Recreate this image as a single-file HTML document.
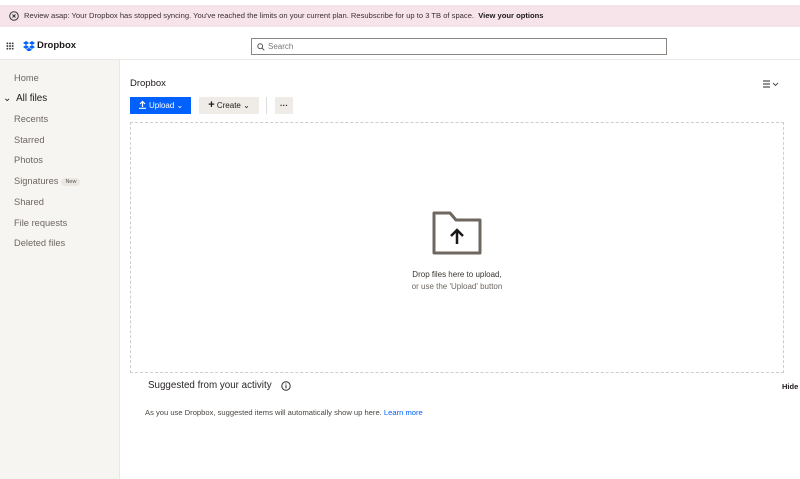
<!DOCTYPE html>
<html><head><meta charset="utf-8"><style>
*{box-sizing:border-box;margin:0;padding:0}
body{width:800px;height:479px;overflow:hidden;background:#fff;font-family:"Liberation Sans",sans-serif;color:#1e1919;position:relative}
.banner{position:absolute;left:0;top:5px;width:800px;height:22px;background:#f6e4ea;font-size:7.6px;line-height:22px;padding-left:24px;color:#3a3030}
.banner .x{position:absolute;left:9px;top:6px;width:10px;height:10px;border:1px solid #333;border-radius:50%}
.banner b{color:#1e1919}
.header{position:absolute;top:27px;left:0;width:800px;height:33px;border-bottom:1px solid #ece9e4}
.grid{position:absolute;left:6px;top:15px;width:8px;height:8px;background-image:radial-gradient(#333 0.8px,transparent 1px);background-size:2.7px 2.7px}
.logo{position:absolute;left:23px;top:13px;font-size:9.5px;font-weight:bold;display:flex;align-items:center;gap:2px}
.search{position:absolute;left:251px;top:11px;width:416px;height:17px;border:1px solid #8a8580;font-size:8px;color:#777;line-height:15px;padding-left:16px}
.search svg{position:absolute;left:5px;top:4px}
.side{position:absolute;left:0;top:60px;width:120px;height:419px;background:#f7f5f2;border-right:1px solid #ebe8e3}
.side div{position:absolute;left:14px;font-size:9.3px;color:#6d6660}
.side .act{color:#1e1919;font-size:9.8px}
.new{display:inline-block;background:#ebe6df;border-radius:6px;font-size:5.5px;padding:1px 4px;margin-left:3px;color:#555;vertical-align:1px}
.title{position:absolute;left:130px;top:78px;font-size:9.5px}
.btn{position:absolute;top:97px;height:17px;font-size:8px;line-height:17px;text-align:center}
.up{left:130px;width:61px;background:#0061fe;color:#fff}
.cr{left:199px;width:60px;background:#efece8;color:#1e1919}
.dots{left:275px;width:18px;background:#efece8;font-weight:bold}
.sep{position:absolute;left:266px;top:97px;width:1px;height:17px;background:#ddd}
.drop{position:absolute;left:130px;top:122px;width:654px;height:251px;border:1px dashed #d0ccc7}
.fold{position:absolute;left:432px;top:210px}
.dt{position:absolute;left:357px;width:200px;text-align:center;font-size:8px;color:#3a3530}
.sug{position:absolute;left:148px;top:380px;font-size:9.8px;color:#2a2525}
.info{position:absolute;left:281px;top:381px}
.hide{position:absolute;left:782px;top:382px;font-size:7.5px;font-weight:bold}
.note{position:absolute;left:145px;top:408px;font-size:7.6px;color:#4a4540}
.note span{color:#0061fe}
.view{position:absolute;left:763px;top:79px}
</style></head><body>
<div class="banner"><svg class="x" style="border:none" width="10" height="10" viewBox="0 0 10 10"><circle cx="5" cy="5" r="4.3" fill="none" stroke="#333"/><path d="M3.5 3.5l3 3M6.5 3.5l-3 3" stroke="#333"/></svg>Review asap: Your Dropbox has stopped syncing. You've reached the limits on your current plan. Resubscribe for up to 3 TB of space. &nbsp;<b>View your options</b></div>
<div class="header">
<div class="grid"></div>
<div class="logo"><svg width="12" height="10" viewBox="0 0 12 10"><path fill="#0061fe" d="M3 0L0 2l3 2 3-2zM9 0L6 2l3 2 3-2zM0 6l3 2 3-2-3-2zM9 4L6 6l3 2 3-2zM3 8.7L6 10.7 9 8.7 6 6.7z"/></svg>Dropbox</div>
<div class="search"><svg width="8" height="8" viewBox="0 0 8 8"><circle cx="3.2" cy="3.2" r="2.4" fill="none" stroke="#555" stroke-width="1"/><path d="M5 5l2.3 2.3" stroke="#555"/></svg>Search</div>
</div>
<div class="side">
<div style="top:13px">Home</div>
<div class="act" style="top:33px;left:3px">⌄&nbsp; All files</div>
<div style="top:54px">Recents</div>
<div style="top:75px">Starred</div>
<div style="top:95px">Photos</div>
<div style="top:116px">Signatures<span class="new">New</span></div>
<div style="top:137px">Shared</div>
<div style="top:158px">File requests</div>
<div style="top:178px">Deleted files</div>
</div>
<div class="title">Dropbox</div>
<svg class="view" width="18" height="10" viewBox="0 0 18 10"><path d="M0 2h7M0 5h7M0 8h7" stroke="#555" stroke-width="1.2"/><path d="M10 4l2.5 2.5L15 4" stroke="#555" fill="none"/></svg>
<div class="btn up"><svg width="9" height="9" viewBox="0 0 9 9" style="vertical-align:-1px"><path d="M4.5 7V1.5M2 4l2.5-2.5L7 4M1 8.3h7" stroke="#fff" stroke-width="1.2" fill="none"/></svg> Upload ⌄</div>
<div class="btn cr"><b style="font-size:11px">+</b> Create ⌄</div>
<div class="sep"></div>
<div class="btn dots">···</div>
<div class="drop"></div>
<svg class="fold" width="50" height="46" viewBox="0 0 50 46"><path d="M2 3h16l6 7h24v33H2z" fill="none" stroke="#6e6760" stroke-width="3" stroke-linejoin="round"/><path d="M25 34V20M19 26l6-6 6 6" stroke="#1e1919" stroke-width="2.5" fill="none"/></svg>
<div class="dt" style="top:270px">Drop files here to upload,</div>
<div class="dt" style="top:282px;color:#6d6660">or use the 'Upload' button</div>
<div class="sug">Suggested from your activity</div>
<svg class="info" width="10" height="10" viewBox="0 0 10 10"><circle cx="5" cy="5" r="4.2" fill="none" stroke="#333"/><path d="M5 4.3v3M5 2.5v1" stroke="#333" stroke-width="1.1"/></svg>
<div class="hide">Hide</div>
<div class="note">As you use Dropbox, suggested items will automatically show up here. <span>Learn more</span></div>
</body></html>
